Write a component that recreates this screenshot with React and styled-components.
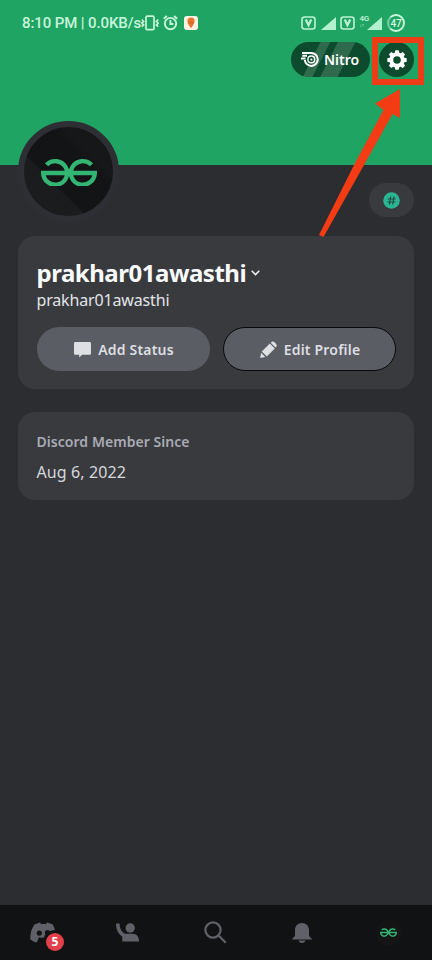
import React from 'react';
import styled, { createGlobalStyle } from 'styled-components';

const GeeksLogo = ({ width, stroke = 4.2 }) => (
  <svg width={width} height={width / 2} viewBox="0 0 56 28" fill="none" stroke="#33b573" strokeWidth={stroke}>
    <path d="M5.5 6.8A12 11.8 0 1 1 2.2 15H53.8A12 11.8 0 1 1 50.5 6.8" />
  </svg>
);

const VoLte = () => (
  <svg width="15" height="14" viewBox="0 0 15 14" fill="none" stroke="#bdf3d5">
    <rect x="1" y="1" width="13" height="12" rx="2.5" strokeWidth="1.6" />
    <path d="M4.800 3.500L7.500 9.200L10.200 3.500" strokeWidth="2.2" />
  </svg>
);

const Signal = () => (
  <svg width="15" height="13" viewBox="0 0 15 13">
    <path d="M0 13L15 0v13z" fill="#b4f0ce" />
  </svg>
);

const teeth = [0, 45, 90, 135, 180, 225, 270, 315];

const Gear = () => (
  <svg width="20" height="20" viewBox="-10 -10 20 20" fill="#fff">
    <circle r="5.700" fill="none" stroke="#fff" strokeWidth="3.800" />
    {teeth.map((angle) => (
      <path key={angle} d="M-2.500-6.500L-1.700-9.700H1.700L2.500-6.500z" transform={`rotate(${angle})`} />
    ))}
  </svg>
);

const StatusBar = () => (
  <Status>
    <StatusText>8:10 PM | 0.0KB/s</StatusText>
    <svg width="18" height="16" viewBox="0 0 18 16" fill="none" stroke="#c8f5da" strokeWidth="1.7">
      <rect x="5" y="1.2" width="8" height="13.4" rx="1.2" />
      <path d="M.8 4.500l1.800 2-1.800 1.700 1.800 1.700-1.800 1.700M17.200 4.500l-1.800 2 1.800 1.700-1.800 1.700 1.800 1.700" />
    </svg>
    <AlarmIcon width="15" height="16" viewBox="0 0 15 16" fill="none" stroke="#c8f5da" strokeWidth="1.9">
      <circle cx="7.5" cy="8.6" r="5.7" />
      <path d="M7.400 5v4h3M.8 3.800L3.900 1M14.200 3.800L11.100 1" />
    </AlarmIcon>
    <AppIcon width="14" height="14" viewBox="0 0 14 14">
      <rect width="14" height="14" rx="3" fill="#fff3e5" />
      <path d="M7 12.300C5.500 10.200 3.400 7.500 3.400 5.100a3.600 3.600 0 0 1 7.200 0C10.600 7.500 8.500 10.200 7 12.300z" fill="#e8762c" />
      <path d="M7 4.500v2.500h3M3.800 7H7" stroke="#c65f22" strokeWidth=".8" fill="none" />
    </AppIcon>
    <StatusEnd>
      <VoLte />
      <Signal />
      <VoLte />
      <Network>
        <NetworkLabel>
          4G<small>↓↑</small>
        </NetworkLabel>
        <Signal />
      </Network>
      <Battery>47</Battery>
    </StatusEnd>
  </Status>
);

const App = () => {
  return (
    <Screen>
      <GlobalStyle />

      <Banner>
        <StatusBar />
        <Actions>
          <NitroButton>
            <svg width="18" height="17" viewBox="0 0 18 17" fill="none" stroke="#fff">
              <path d="M1 1.900h9.300a6.500 6.500 0 1 1-6.500 7.100M1.300 4.800h4.700M0 7.500h4.600" strokeWidth="2" />
              <circle cx="10.3" cy="8.4" r="3.400" strokeWidth="1.4" />
              <circle cx="10.3" cy="8.4" r="1" fill="#fff" stroke="none" />
            </svg>
            Nitro
          </NitroButton>
          <SettingsButton aria-label="settings">
            <Gear />
          </SettingsButton>
        </Actions>
      </Banner>

      <ProfileRow>
        <Avatar>
          <GeeksLogo width={56} stroke={4.4} />
        </Avatar>
        <BadgePill>
          <svg width="17" height="17" viewBox="0 0 17 17">
            <circle cx="8.5" cy="8.5" r="8.3" fill="#2bb491" />
            <path d="M7.700 4.500l-1.300 8M11 4.500l-1.300 8M4.700 7h8M4.300 10h8" stroke="#234a45" strokeWidth="1.2" />
          </svg>
        </BadgePill>
      </ProfileRow>

      <UserCard>
        <NameRow>
          <DisplayName>prakhar01awasthi</DisplayName>
          <svg width="9" height="6" viewBox="0 0 9 6" fill="none" stroke="#f2f3f5" strokeWidth="1.5">
            <path d="M.7.8l3.800 3.800L8.300.8" />
          </svg>
        </NameRow>
        <Username>prakhar01awasthi</Username>
        <ButtonRow>
          <ProfileButton>
            <svg width="17" height="17" viewBox="0 0 17 17" fill="#dddfe3">
              <path d="M1.500 1h14A1.400 1.400 0 0 1 17 2.400v10a1.400 1.400 0 0 1-1.500 1.400H8.200L5.200 16.500V13.800H1.500A1.400 1.400 0 0 1 0 12.400v-10A1.400 1.400 0 0 1 1.500 1z" />
            </svg>
            Add Status
          </ProfileButton>
          <ProfileButton $outlined>
            <svg width="17" height="17" viewBox="0 0 17 17" fill="#dddfe3">
              <path d="M1.100 11.800l4.200 4.200L.2 17zM1.800 10.500l8-8 5 5-8 8zM10.700 1.700l.9-.8c1.800-1.700 6.500 3 4.700 4.800l-.8.900z" />
            </svg>
            Edit Profile
          </ProfileButton>
        </ButtonRow>
      </UserCard>

      <MemberCard>
        <MemberTitle>Discord Member Since</MemberTitle>
        <MemberDate>Aug 6, 2022</MemberDate>
      </MemberCard>

      <NavBar>
        <NavItem>
          <svg width="26" height="21" viewBox="0 0 26 21" fill="currentColor">
            <path
              fillRule="evenodd"
              d="M4.500 2.500L9.800.6l1.500 1.600c1.500-.2 3-.2 4.400 0L17.200.6l5.300 1.700C24.500 5.500 25.700 9.500 26 14.500l-5.500 3.200-2-2.600c-3 .9-6.500 1-9.500.2L6.700 20.400C4 19.800 2 18.700.3 17.200 0 11.700 1.500 6.500 4.500 2.500zM9.300 8.400a2.600 2.700 0 1 0 .01 5.400 2.600 2.700 0 1 0 0-5.400zM17.500 8a2.600 2.700 0 1 0 .01 5.400 2.600 2.700 0 1 0 0-5.400z"
            />
          </svg>
          <Count>5</Count>
        </NavItem>
        <NavItem>
          <WaveIcon width="23" height="19" viewBox="0 0 23 19" fill="currentColor">
            <circle cx="14.200" cy="5" r="4.700" />
            <path d="M0 .6h3.600C3.600 6 6 9.800 9.500 10.800h7c4 0 6.500 2.700 6.500 7.700H6.300v-5C2.500 11.200 0 7 0 .6z" />
          </WaveIcon>
        </NavItem>
        <NavItem>
          <svg width="23" height="23" viewBox="0 0 23 23" fill="none" stroke="currentColor" strokeWidth="2.2">
            <circle cx="9" cy="9" r="7.600" />
            <path d="M14.500 14.500l7.300 7.300" />
          </svg>
        </NavItem>
        <NavItem>
          <svg width="20" height="20" viewBox="0 0 20 20" fill="currentColor">
            <path d="M10 0c4.200 0 7 3 7 7v5.500c0 1.500 3 2.500 3 4H0c0-1.500 3-2.500 3-4V7c0-4 2.800-7 7-7zM6.500 17.500h7c-.5 3.300-6.500 3.300-7 0z" />
          </svg>
        </NavItem>
        <NavItem>
          <NavAvatar>
            <GeeksLogo width={17} stroke={4.5} />
          </NavAvatar>
        </NavItem>
      </NavBar>

      <Highlight />
      <Arrow width="90" height="152" viewBox="0 0 90 152" fill="#f33b14">
        <path d="M5.500 149L1 147 36 77 65.500 22 57 15.500 82 1V30L74.500 26 46 77z" />
      </Arrow>
    </Screen>
  );
};

const GlobalStyle = createGlobalStyle`
  * {
    box-sizing: border-box;
  }

  body {
    margin: 0;
    background: #2c2d31;
    font-family: 'Noto Sans', sans-serif;
  }

  svg {
    display: block;
    flex-shrink: 0;
  }
`;

const Screen = styled.main`
  position: relative;
  display: flex;
  flex-direction: column;
  width: 432px;
  height: 960px;
  overflow: hidden;
  background: #2c2d31;
`;

const Banner = styled.header`
  height: 165px;
  flex-shrink: 0;
  background: #20a464;
`;

const Status = styled.div`
  display: flex;
  align-items: center;
  height: 42px;
  padding: 4px 27px 0 22px;
`;

const StatusText = styled.span`
  font: 500 15px Roboto, sans-serif;
  letter-spacing: -0.11px;
  color: #c8f5da;
  white-space: nowrap;
`;

const AlarmIcon = styled.svg`
  margin-left: 4px;
`;

const AppIcon = styled.svg`
  margin-left: 6px;
`;

const StatusEnd = styled.div`
  display: flex;
  align-items: center;
  gap: 4.5px;
  margin-left: auto;
`;

const Network = styled.div`
  display: flex;
`;

const NetworkLabel = styled.span`
  display: flex;
  flex-direction: column;
  width: 10px;
  margin: -3px -3px 0 0;
  font: 500 8px/9px Roboto, sans-serif;
  letter-spacing: -0.3px;
  color: #c8f5da;

  small {
    font-size: 5px;
    line-height: 5px;
  }
`;

const Battery = styled.span`
  display: flex;
  align-items: center;
  justify-content: center;
  width: 18px;
  height: 18px;
  margin-left: 1px;
  border: 2px solid #c8f5da;
  border-left-color: #79cda0;
  border-radius: 50%;
  font: 500 10px Roboto, sans-serif;
  letter-spacing: -0.3px;
  color: #d5f8e3;
`;

const Actions = styled.div`
  display: flex;
  justify-content: flex-end;
  gap: 9px;
  padding-right: 18px;
`;

const NitroButton = styled.button`
  display: flex;
  align-items: center;
  justify-content: center;
  gap: 5px;
  width: 79px;
  height: 35px;
  padding: 0 1px 0 0;
  border: 0;
  border-radius: 18px;
  background: linear-gradient(
    117deg,
    #0d4b2e 30%,
    #2f6a4c 31% 40%,
    #0d4b2e 41% 48%,
    #2f6a4c 49% 66%,
    #0d4b2e 67%
  );
  font: 600 14px 'Noto Sans', sans-serif;
  color: #fff;
`;

const SettingsButton = styled.button`
  display: flex;
  align-items: center;
  justify-content: center;
  width: 35px;
  height: 35px;
  padding: 0;
  border: 0;
  border-radius: 50%;
  background: #0d4b2e;
  color: #fff;
`;

const ProfileRow = styled.div`
  display: flex;
  align-items: flex-end;
  justify-content: space-between;
  height: 101px;
  margin: -44px 18px 0;
  flex-shrink: 0;
`;

const Avatar = styled.div`
  display: flex;
  align-items: center;
  justify-content: center;
  width: 101px;
  height: 101px;
  border: 6px solid #2e2f34;
  border-radius: 50%;
  background: linear-gradient(45deg, #1b1c1d 34%, #131415 36% 65%, #161718 72%);
`;

const BadgePill = styled.div`
  display: flex;
  align-items: center;
  justify-content: center;
  width: 45px;
  height: 34px;
  margin-bottom: 5px;
  border-radius: 17px;
  background: #393a3e;
`;

const Card = styled.section`
  margin: 0 18px;
  padding: 0 18.5px;
  border-radius: 17px;
  background: #393a3e;
  flex-shrink: 0;
`;

const UserCard = styled(Card)`
  height: 153px;
  margin-top: 14px;
  padding-top: 20px;
`;

const NameRow = styled.div`
  display: flex;
  align-items: center;
  gap: 5px;
  height: 33px;
`;

const DisplayName = styled.h1`
  margin: 0;
  font-size: 24px;
  font-weight: 700;
  line-height: 32px;
  letter-spacing: -0.48px;
  color: #fafbfc;
`;

const Username = styled.div`
  font-size: 16px;
  font-weight: 400;
  line-height: 23px;
  letter-spacing: -0.16px;
  color: #e2e4e8;
`;

const ButtonRow = styled.div`
  display: grid;
  grid-template-columns: 1fr 1fr;
  gap: 13px;
  margin-top: 15px;
`;

const ProfileButton = styled.button`
  display: flex;
  align-items: center;
  justify-content: center;
  gap: 7px;
  height: 44px;
  padding: 0 0 0 2px;
  border: ${({ $outlined }) => ($outlined ? '1px solid #08090b' : '0')};
  border-radius: 22px;
  background: #5a5d64;
  font: 600 14px 'Noto Sans', sans-serif;
  letter-spacing: 0.2px;
  color: #dddfe3;
`;

const MemberCard = styled(Card)`
  height: 88px;
  margin-top: 23px;
  padding-top: 18px;
`;

const MemberTitle = styled.h2`
  margin: 0;
  font-size: 14px;
  font-weight: 600;
  line-height: 23px;
  letter-spacing: 0.05px;
  color: #a9abb4;
`;

const MemberDate = styled.div`
  margin-top: 7px;
  font-size: 16px;
  line-height: 24px;
  letter-spacing: 0.1px;
  color: #d6d8dc;
`;

const NavBar = styled.nav`
  display: grid;
  grid-template-columns: repeat(5, 1fr);
  height: 55px;
  margin-top: auto;
  flex-shrink: 0;
  background: #111214;
`;

const NavItem = styled.div`
  position: relative;
  display: flex;
  align-items: center;
  justify-content: center;
  color: #606168;
`;

const WaveIcon = styled.svg`
  margin-right: 4px;
`;

const Count = styled.span`
  position: absolute;
  top: 28px;
  left: 46px;
  width: 18px;
  height: 18px;
  border-radius: 50%;
  box-shadow: 0 0 0 3px #111214;
  background: #e3404b;
  font-size: 12px;
  font-weight: 700;
  line-height: 18px;
  text-align: center;
  color: #fff;
`;

const NavAvatar = styled.div`
  display: flex;
  align-items: center;
  justify-content: center;
  width: 26px;
  height: 26px;
  border-radius: 50%;
  background: #151516;
`;

/* callout drawn over the settings button */
const Highlight = styled.div`
  position: absolute;
  top: 37px;
  left: 372px;
  width: 52px;
  height: 48px;
  border: 6px solid #ec3d16;
`;

const Arrow = styled.svg`
  position: absolute;
  top: 88px;
  left: 318px;
`;

export default App;
